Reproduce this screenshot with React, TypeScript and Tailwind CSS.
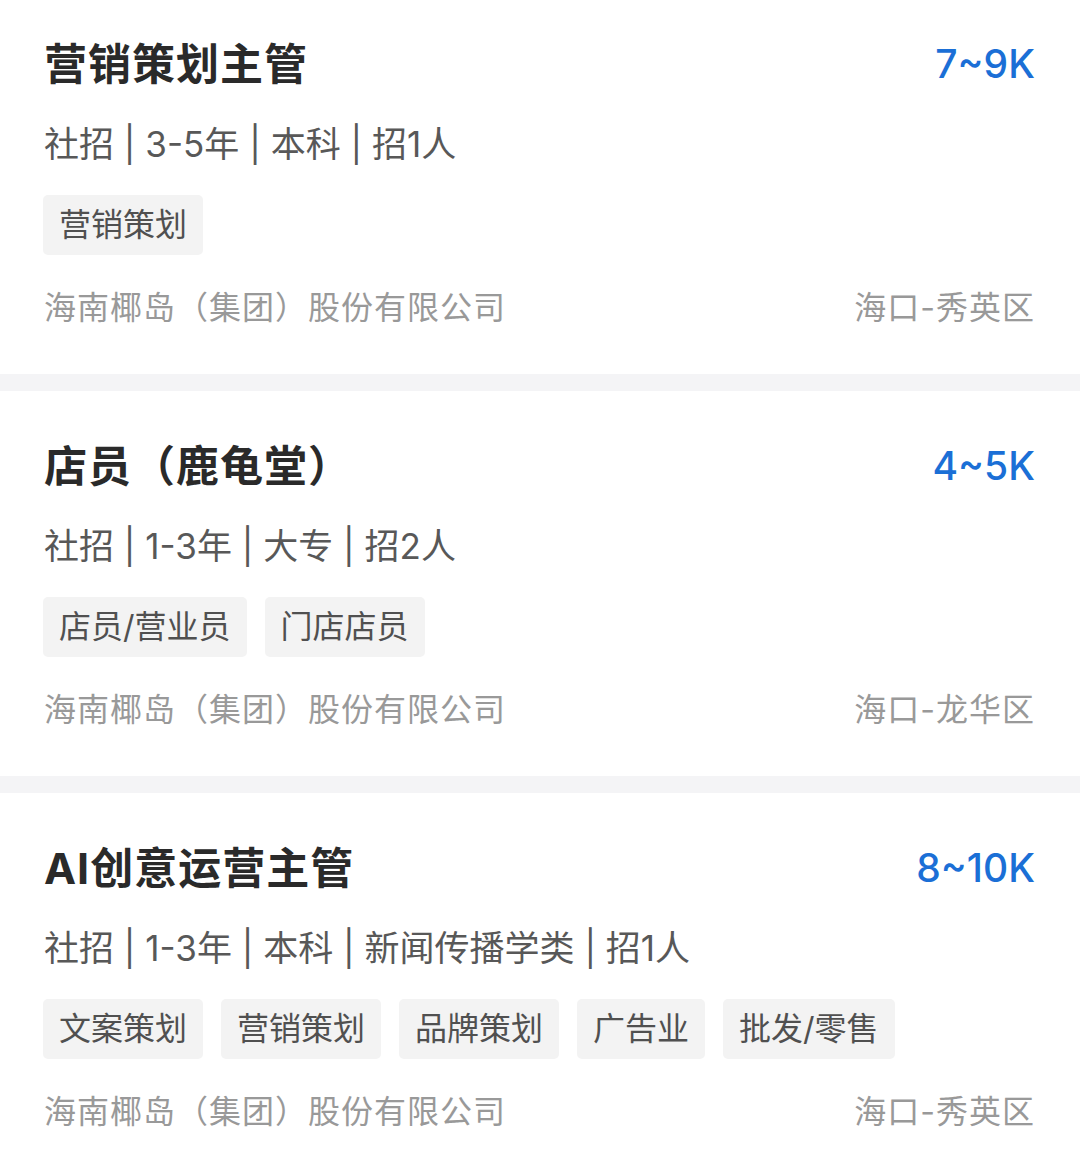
import React from "react";

type Job = {
  title: string;
  salary: string;
  info: string;
  tags: string[];
  company: string;
  location: string;
};

const jobs: Job[] = [
  {
    title: "营销策划主管",
    salary: "7~9K",
    info: "社招 | 3-5年 | 本科 | 招1人",
    tags: ["营销策划"],
    company: "海南椰岛（集团）股份有限公司",
    location: "海口-秀英区",
  },
  {
    title: "店员（鹿龟堂）",
    salary: "4~5K",
    info: "社招 | 1-3年 | 大专 | 招2人",
    tags: ["店员/营业员", "门店店员"],
    company: "海南椰岛（集团）股份有限公司",
    location: "海口-龙华区",
  },
  {
    title: "AI创意运营主管",
    salary: "8~10K",
    info: "社招 | 1-3年 | 本科 | 新闻传播学类 | 招1人",
    tags: ["文案策划", "营销策划", "品牌策划", "广告业", "批发/零售"],
    company: "海南椰岛（集团）股份有限公司",
    location: "海口-秀英区",
  },
];

function Card({ job, first }: { job: Job; first: boolean }) {
  return (
    <div
      className={`flex flex-col bg-white pl-[43px] pr-[45px] pb-[44px] ${
        first ? "pt-[34px]" : "pt-[45px]"
      }`}
    >
      <div className="flex items-center justify-between h-[60px]">
        <div className="pl-[1px] text-[43px] font-bold text-[#2a2a2a] leading-[60px] tracking-[1px]">
          {job.title}
        </div>
        <div className="text-[39px] text-[#1b6fd6] leading-[60px] font-medium">
          {job.salary}
        </div>
      </div>
      <div className="mt-[25px] pl-[1px] h-[50px] text-[35px] leading-[50px] text-[#585858] whitespace-pre">
        {job.info}
      </div>
      <div className="mt-[26px] flex gap-[18px]">
        {job.tags.map((t) => (
          <div
            key={t}
            className="h-[60px] px-[16px] rounded-[5px] bg-[#f3f3f3] text-[32px] leading-[60px] text-[#505050]"
          >
            {t}
          </div>
        ))}
      </div>
      <div className="mt-[31px] pl-[1px] flex items-center justify-between h-[44px] text-[32px] leading-[44px] text-[#999999]">
        <div className="tracking-[1px]">{job.company}</div>
        <div className="tracking-[1px]">{job.location}</div>
      </div>
    </div>
  );
}

export default function App() {
  return (
    <div
      className="w-[1080px] h-[1163px] overflow-hidden bg-white"
      style={{ fontFamily: 'Inter, "Noto Sans CJK SC", "Noto Sans", sans-serif' }}
    >
      {jobs.map((j, i) => (
        <React.Fragment key={i}>
          {i > 0 && <div className="h-[17px] bg-[#f4f4f6]" />}
          <Card job={j} first={i === 0} />
        </React.Fragment>
      ))}
    </div>
  );
}
